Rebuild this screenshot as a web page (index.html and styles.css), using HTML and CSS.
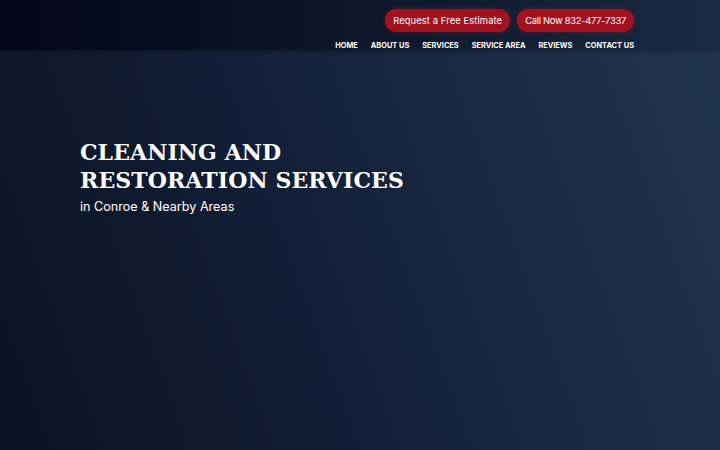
FILE: index.html
```html
<!DOCTYPE html>
<html lang="en">
<head>
<meta charset="utf-8">
<title>Cleaning and Restoration Services</title>
<link rel="stylesheet" href="styles.css">
</head>
<body>
<div class="page">
  <header class="header">
    <div class="header-inner">
      <div class="cta-row">
        <a class="pill pill-estimate" href="#">Request a Free Estimate</a>
        <a class="pill pill-call" href="#">Call Now 832-477-7337</a>
      </div>
      <nav class="nav">
        <a href="#">HOME</a>
        <a href="#">ABOUT US</a>
        <a href="#">SERVICES</a>
        <a href="#">SERVICE AREA</a>
        <a href="#">REVIEWS</a>
        <a href="#">CONTACT US</a>
      </nav>
    </div>
  </header>
  <main class="hero">
    <h1 class="hero-title">CLEANING AND<br>RESTORATION SERVICES</h1>
    <p class="hero-sub">in Conroe &amp; Nearby Areas</p>
  </main>
</div>
</body>
</html>
```

FILE: styles.css
```css
* { box-sizing: border-box; }
html, body { margin: 0; padding: 0; }
body {
  width: 720px;
  height: 450px;
  overflow: hidden;
  font-family: "Inter", "Open Sans", sans-serif;
  color: #fff;
}
.page {
  width: 720px;
  height: 450px;
  display: flex;
  flex-direction: column;
  background: linear-gradient(70deg, #0a1222 0%, #132038 45%, #1c2e47 80%, #20364e 100%);
}
.header {
  height: 50px;
  background: linear-gradient(90deg, #02061a 0%, #0c1427 45%, #1a2a42 100%);
  box-shadow: 0 1px 3px rgba(0,0,0,0.25);
}
.header-inner {
  padding: 9px 86px 0 0;
  display: flex;
  flex-direction: column;
  align-items: flex-end;
}
.cta-row {
  display: flex;
  gap: 7px;
}
.pill {
  display: block;
  height: 23px;
  line-height: 23px;
  padding: 0 8px;
  border-radius: 12px;
  background: #a3121f;
  color: #fff;
  text-decoration: none;
  font-size: 9.4px;
  box-shadow: 0 0 4px rgba(160,20,30,0.5);
}
.pill-estimate {
  letter-spacing: 0.1px;
}
.pill-call {
  letter-spacing: -0.28px;
}
.nav {
  display: flex;
  gap: 13px;
  margin-top: 8px;
}
.nav a {
  color: #fff;
  text-decoration: none;
  font-size: 7.4px;
  font-weight: 700;
  line-height: 11px;
}
.hero {
  padding: 88px 0 0 80px;
}
.hero-title {
  margin: 0;
  font-family: "DejaVu Serif", "Liberation Serif", serif;
  font-weight: 700;
  font-size: 22px;
  line-height: 28px;
  letter-spacing: 0.1px;
}
.hero-sub {
  margin: 5px 0 0;
  font-size: 12.6px;
  line-height: 16px;
}
```
